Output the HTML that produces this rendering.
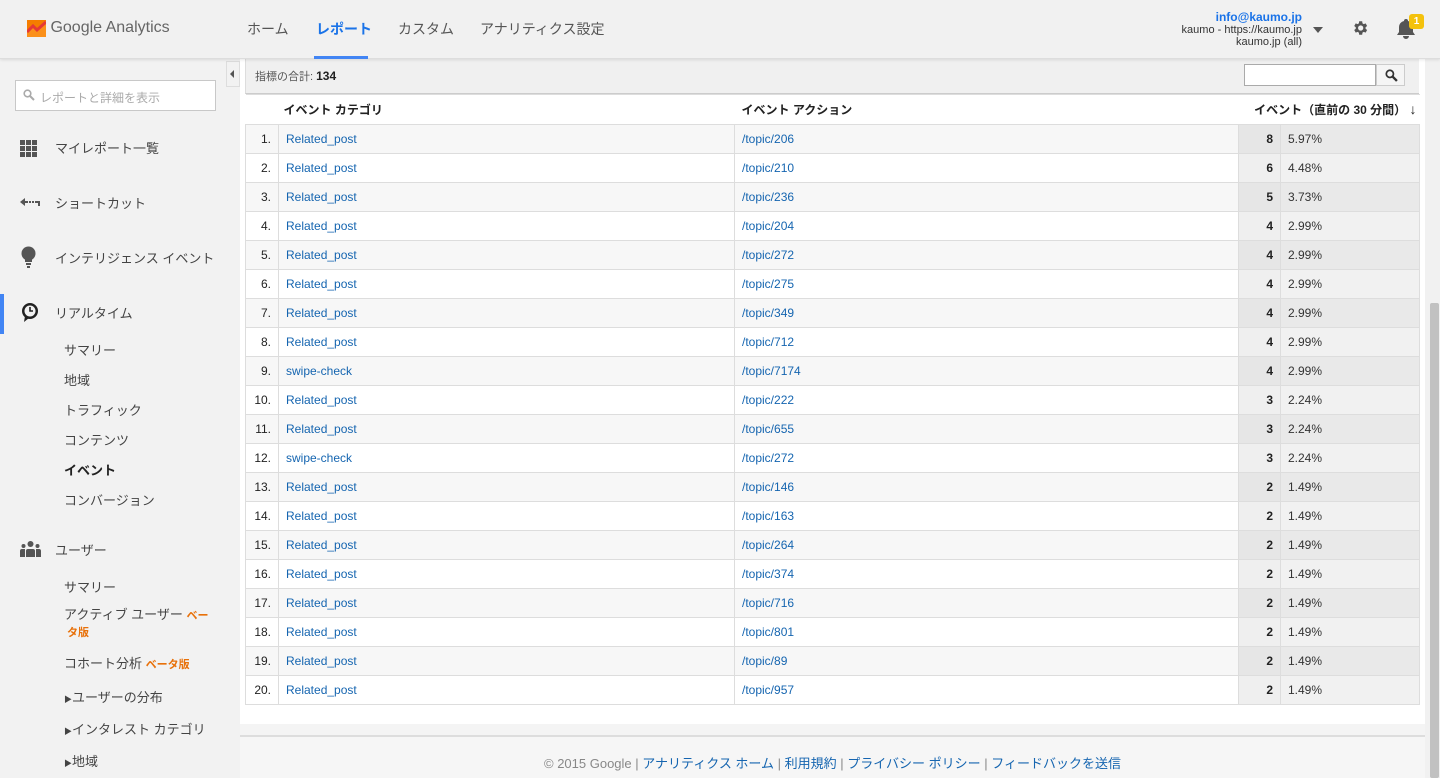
<!DOCTYPE html>
<html><head><meta charset="utf-8"><style>
*{box-sizing:border-box;margin:0;padding:0}
body{width:1440px;height:778px;overflow:hidden;background:#f2f2f2;font-family:"Liberation Sans","Noto Sans CJK JP",sans-serif;color:#222;position:relative}
.hdr{position:absolute;left:0;top:0;width:1440px;height:59px;background:#f1f1f1;border-bottom:1px solid #ddd;box-shadow:0 1px 3px rgba(0,0,0,.1);z-index:2}
.logo{position:absolute;left:27px;top:19px;font-size:16px;color:#666}
.logo span{display:inline-block;vertical-align:middle}
.nav{position:absolute;top:19px;font-size:14px;color:#555}
.navu{position:absolute;left:314px;top:56px;width:54px;height:3px;background:#4285f4}
.acct{position:absolute;right:138px;top:11px;text-align:right;font-size:11px;line-height:12px;color:#333}
.acct b{color:#1a73e8;font-size:12px}
.side{position:absolute;left:0;top:59px;width:240px;height:719px;background:#f2f2f2}
.sbox{position:absolute;left:15px;top:21px;width:201px;height:31px;border:1px solid #c8c8c8;background:#fff;font-size:12px;color:#aaa;padding:8px 0 0 24px}
.mi{position:absolute;left:55px;font-size:13px;color:#444}
.ic{position:absolute;left:20px}
.sub{position:absolute;left:64px;font-size:13px;color:#444}
.beta{color:#e8710a;font-size:11px;font-weight:bold}
.main{position:absolute;left:240px;top:59px;width:1185px;height:676px;background:#fff}
.bar{position:absolute;left:5px;top:0;width:1174px;height:35px;background:#f0f0f0;border-bottom:1px solid #ccc;border-left:1px solid #ddd}
table{position:absolute;left:5px;top:35px;width:1174px;border-collapse:collapse;font-size:12px;table-layout:fixed}
td,th{height:29px;border:1px solid #ddd;padding:0 7px}
th{background:#fff;font-weight:bold;text-align:left;height:30px;border-left:none;border-right:none}
td.n{text-align:right}
td a{color:#1565b0;text-decoration:none}
tr:nth-child(odd) td{background:#fff}
tr:nth-child(even) td{background:#f7f7f7}
tr:nth-child(even) td.v{background:#e6e6e6}
tr:nth-child(odd) td.v{background:#efefef}
tr:nth-child(even) td.p{background:#e9e9e9}
tr:nth-child(odd) td.p{background:#f1f1f1}
td.v{text-align:right;font-weight:bold}
td.p{color:#333}
.foot{position:absolute;left:240px;top:735px;width:1185px;height:43px;background:#f6f6f6;border-top:2px solid #ddd;font-size:13px;color:#888;text-align:center;padding-top:16px}
.foot a{color:#1565b0;text-decoration:none}
.sb{position:absolute;left:1425px;top:59px;width:15px;height:719px;background:#f1f1f1}
.thumb{position:absolute;left:5px;top:244px;width:9px;height:475px;background:#c1c1c1;border-radius:2px}
</style></head><body>
<div class="hdr">
<div class="logo"><svg width="19" height="17" viewBox="0 0 19 17" style="vertical-align:middle"><rect width="19" height="17" fill="#f57c00"/><path d="M0 17L0 10 6 5 10 9 19 1 19 17Z" fill="#ff9e2c" opacity=".6"/><path d="M0 12L6 6 10 10 19 2" stroke="#e53935" stroke-width="3" fill="none"/></svg> <span>Google Analytics</span></div>
<div class="nav" style="left:247px">ホーム</div>
<div class="nav" style="left:316px;color:#1a73e8;font-weight:bold">レポート</div>
<div class="nav" style="left:398px">カスタム</div>
<div class="nav" style="left:480px">アナリティクス設定</div>
<div class="navu"></div>
<div class="acct"><b>info@kaumo.jp</b><br>kaumo - https://kaumo.jp<br>kaumo.jp (all)</div>
<div style="position:absolute;left:1313px;top:27px;border:5px solid transparent;border-top:6px solid #555"></div>
<svg style="position:absolute;left:1351px;top:19px" width="18" height="18" viewBox="0 0 24 24"><path fill="#555" d="M19.4 13a7.5 7.5 0 000-2l2.1-1.6-2-3.5-2.5 1a7 7 0 00-1.7-1L14.9 3h-4l-.4 2.9a7 7 0 00-1.7 1l-2.5-1-2 3.5L6.4 11a7.5 7.5 0 000 2l-2.1 1.6 2 3.5 2.5-1a7 7 0 001.7 1l.4 2.9h4l.4-2.9a7 7 0 001.7-1l2.5 1 2-3.5zM12.9 15.5a3.5 3.5 0 110-7 3.5 3.5 0 010 7z"/></svg>
<svg style="position:absolute;left:1396px;top:18px" width="20" height="22" viewBox="0 0 20 22"><path fill="#555" d="M10 1a2 2 0 012 2 6 6 0 015 6v5l2 3H1l2-3V9a6 6 0 015-6 2 2 0 012-2zM7 18h6a3 3 0 01-6 0z"/></svg>
<div style="position:absolute;left:1409px;top:14px;width:15px;height:15px;background:#f4c20d;border-radius:3px;color:#fff;font-size:10px;font-weight:bold;text-align:center;line-height:15px">1</div>
</div>
<div class="side">
<div style="position:absolute;left:226px;top:2px;width:14px;height:26px;border:1px solid #ddd;background:#f2f2f2"><div style="position:absolute;left:3px;top:8px;border:4px solid transparent;border-right:4px solid #555;border-left:none"></div></div>
<div class="sbox"><svg style="position:absolute;left:7px;top:8px" width="12" height="12" viewBox="0 0 12 12"><circle cx="4.5" cy="4.5" r="3.3" stroke="#aaa" stroke-width="1.6" fill="none"/><path d="M7 7L11 11" stroke="#aaa" stroke-width="2"/></svg>レポートと詳細を表示</div>
<svg class="ic" style="top:81px" width="17" height="17"><g fill="#555"><rect x="0" y="0" width="5" height="5"/><rect x="6" y="0" width="5" height="5"/><rect x="12" y="0" width="5" height="5"/><rect x="0" y="6" width="5" height="5"/><rect x="6" y="6" width="5" height="5"/><rect x="12" y="6" width="5" height="5"/><rect x="0" y="12" width="5" height="5"/><rect x="6" y="12" width="5" height="5"/><rect x="12" y="12" width="5" height="5"/></g></svg>
<div class="mi" style="top:79px">マイレポート一覧</div>
<svg class="ic" style="top:138px" width="21" height="10"><path d="M0 5L5 1V9Z M5 4H8V6H5Z M9 4H11V6H9Z M12 4H14V6H12Z M15 4H20V9H18V6H15Z" fill="#555"/></svg>
<div class="mi" style="top:134px">ショートカット</div>
<svg class="ic" style="top:187px;left:21px" width="15" height="22"><circle cx="7.5" cy="7.5" r="7" fill="#555"/><rect x="4" y="13" width="7" height="3" fill="#555"/><rect x="5" y="17" width="5" height="2" fill="#555"/><rect x="6" y="20" width="3" height="2" fill="#555"/></svg>
<div class="mi" style="top:189px">インテリジェンス イベント</div>
<div style="position:absolute;left:0;top:235px;width:4px;height:40px;background:#4285f4"></div>
<svg class="ic" style="top:243px" width="20" height="20"><circle cx="10" cy="9" r="8" fill="#222"/><circle cx="10" cy="9" r="5.5" fill="#f2f2f2"/><path d="M10 5V9H13" stroke="#222" stroke-width="1.6" fill="none"/><path d="M5 14L4 20 9 16Z" fill="#222"/></svg>
<div class="mi" style="top:244px">リアルタイム</div>
<div class="sub" style="top:281px">サマリー</div>
<div class="sub" style="top:311px">地域</div>
<div class="sub" style="top:341px">トラフィック</div>
<div class="sub" style="top:371px">コンテンツ</div>
<div class="sub" style="top:401px;font-weight:bold;color:#222">イベント</div>
<div class="sub" style="top:431px">コンバージョン</div>
<svg class="ic" style="top:482px" width="21" height="16"><g fill="#555"><circle cx="10.5" cy="3" r="3"/><circle cx="3.5" cy="5" r="2"/><circle cx="17.5" cy="5" r="2"/><path d="M6 16V10a2 2 0 012-2H13a2 2 0 012 2V16Z"/><path d="M0 16V10a2 2 0 012-2H5V16Z"/><path d="M16 16V8h3a2 2 0 012 2V16Z"/></g></svg>
<div class="mi" style="top:481px">ユーザー</div>
<div class="sub" style="top:518px">サマリー</div>
<div class="sub" style="top:548px;line-height:15px">アクティブ ユーザー <span class="beta">ベー<br>&nbsp;タ版</span></div>
<div class="sub" style="top:594px">コホート分析 <span class="beta">ベータ版</span></div>
<div class="sub" style="top:628px"><span style="font-size:8px">&#9654;</span>ユーザーの分布</div>
<div class="sub" style="top:660px"><span style="font-size:8px">&#9654;</span>インタレスト カテゴリ</div>
<div class="sub" style="top:692px"><span style="font-size:8px">&#9654;</span>地域</div>
</div>
<div class="main">
<div class="bar"><span style="position:absolute;left:9px;top:9px;font-size:11px;color:#555">指標の合計: <b style="font-size:12px;color:#222">134</b></span>
<div style="position:absolute;left:998px;top:5px;width:132px;height:22px;border:1px solid #aaa;background:#fff"></div>
<div style="position:absolute;left:1130px;top:5px;width:29px;height:22px;border:1px solid #ccc;background:#f5f5f5"><svg style="position:absolute;left:8px;top:4px" width="13" height="13" viewBox="0 0 12 12"><circle cx="4.5" cy="4.5" r="3.3" stroke="#333" stroke-width="1.6" fill="none"/><path d="M7 7L11 11" stroke="#333" stroke-width="2.2"/></svg></div></div>
<table>
<colgroup><col style="width:33px"><col style="width:456px"><col style="width:504px"><col style="width:42px"><col style="width:139px"></colgroup>
<tr><th></th><th style="padding-left:5px">イベント カテゴリ</th><th>イベント アクション</th><th colspan="2" style="text-align:right;padding-right:3px">イベント（直前の 30 分間） <span style="font-weight:normal;font-size:14px">&#8595;</span></th></tr>
<tr><td class="n">1.</td><td><a>Related_post</a></td><td><a>/topic/206</a></td><td class="v">8</td><td class="p">5.97%</td></tr>
<tr><td class="n">2.</td><td><a>Related_post</a></td><td><a>/topic/210</a></td><td class="v">6</td><td class="p">4.48%</td></tr>
<tr><td class="n">3.</td><td><a>Related_post</a></td><td><a>/topic/236</a></td><td class="v">5</td><td class="p">3.73%</td></tr>
<tr><td class="n">4.</td><td><a>Related_post</a></td><td><a>/topic/204</a></td><td class="v">4</td><td class="p">2.99%</td></tr>
<tr><td class="n">5.</td><td><a>Related_post</a></td><td><a>/topic/272</a></td><td class="v">4</td><td class="p">2.99%</td></tr>
<tr><td class="n">6.</td><td><a>Related_post</a></td><td><a>/topic/275</a></td><td class="v">4</td><td class="p">2.99%</td></tr>
<tr><td class="n">7.</td><td><a>Related_post</a></td><td><a>/topic/349</a></td><td class="v">4</td><td class="p">2.99%</td></tr>
<tr><td class="n">8.</td><td><a>Related_post</a></td><td><a>/topic/712</a></td><td class="v">4</td><td class="p">2.99%</td></tr>
<tr><td class="n">9.</td><td><a>swipe-check</a></td><td><a>/topic/7174</a></td><td class="v">4</td><td class="p">2.99%</td></tr>
<tr><td class="n">10.</td><td><a>Related_post</a></td><td><a>/topic/222</a></td><td class="v">3</td><td class="p">2.24%</td></tr>
<tr><td class="n">11.</td><td><a>Related_post</a></td><td><a>/topic/655</a></td><td class="v">3</td><td class="p">2.24%</td></tr>
<tr><td class="n">12.</td><td><a>swipe-check</a></td><td><a>/topic/272</a></td><td class="v">3</td><td class="p">2.24%</td></tr>
<tr><td class="n">13.</td><td><a>Related_post</a></td><td><a>/topic/146</a></td><td class="v">2</td><td class="p">1.49%</td></tr>
<tr><td class="n">14.</td><td><a>Related_post</a></td><td><a>/topic/163</a></td><td class="v">2</td><td class="p">1.49%</td></tr>
<tr><td class="n">15.</td><td><a>Related_post</a></td><td><a>/topic/264</a></td><td class="v">2</td><td class="p">1.49%</td></tr>
<tr><td class="n">16.</td><td><a>Related_post</a></td><td><a>/topic/374</a></td><td class="v">2</td><td class="p">1.49%</td></tr>
<tr><td class="n">17.</td><td><a>Related_post</a></td><td><a>/topic/716</a></td><td class="v">2</td><td class="p">1.49%</td></tr>
<tr><td class="n">18.</td><td><a>Related_post</a></td><td><a>/topic/801</a></td><td class="v">2</td><td class="p">1.49%</td></tr>
<tr><td class="n">19.</td><td><a>Related_post</a></td><td><a>/topic/89</a></td><td class="v">2</td><td class="p">1.49%</td></tr>
<tr><td class="n">20.</td><td><a>Related_post</a></td><td><a>/topic/957</a></td><td class="v">2</td><td class="p">1.49%</td></tr>
</table>
<div style="position:absolute;left:0;top:665px;width:1185px;height:11px;background:#f4f4f4"></div>
</div>
<div class="foot">© 2015 Google | <a>アナリティクス ホーム</a> | <a>利用規約</a> | <a>プライバシー ポリシー</a> | <a>フィードバックを送信</a></div>
<div class="sb"><div class="thumb"></div></div>
</body></html>
